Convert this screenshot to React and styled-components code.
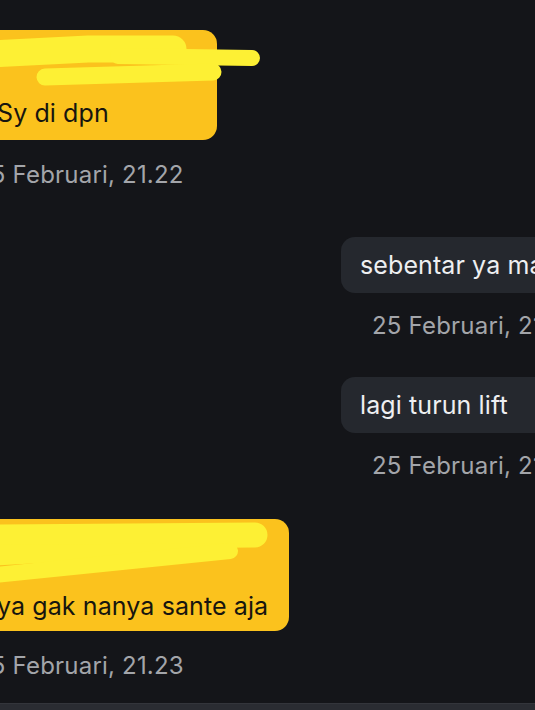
import React from "react";
import styled, { createGlobalStyle } from "styled-components";

const Global = createGlobalStyle`
  html, body { margin: 0; padding: 0; background: #141519; }
  body { font-family: "Inter", "Liberation Sans", sans-serif; }
`;

const Page = styled.div`
  width: 535px;
  height: 710px;
  overflow: hidden;
  background: #141519;
  display: flex;
  flex-direction: column;
`;

const Thread = styled.div`
  flex: 1;
  display: flex;
  flex-direction: column;
  padding-top: 30px;
`;

const Group = styled.div`
  display: flex;
  flex-direction: column;
  align-items: flex-start;
  gap: ${(p) => p.$gap}px;
  margin-top: ${(p) => p.$top || 0}px;
  padding-left: ${(p) => (p.$out ? 341 : 0)}px;
`;

const Bubble = styled.div`
  position: relative;
  box-sizing: border-box;
  width: max-content;
  border-radius: 14px;
  font-size: 25px;
  line-height: 30px;
  letter-spacing: 0.1px;
  white-space: nowrap;
  ${(p) =>
    p.$out
      ? `
    background: #25282e;
    color: #eeeff1;
    padding: 13px 40px 13px 19px;
  `
      : `
    background: #fbc21d;
    color: #17150f;
    margin-left: -32px;
    padding: 12px 16px ${p.$bottom}px 29px;
  `}
`;

const Redacted = styled.div`
  width: ${(p) => p.$w}px;
  height: ${(p) => p.$h}px;
`;

const Scribble = styled.svg`
  position: absolute;
  left: 0;
  top: 0;
  overflow: visible;
  pointer-events: none;
`;

const Time = styled.div`
  font-size: 24px;
  line-height: 30px;
  letter-spacing: 0.2px;
  color: #a3a5aa;
  white-space: nowrap;
  margin-left: ${(p) => (p.$out ? 31 : -24)}px;
`;

const InputEdge = styled.div`
  height: 6px;
  background: #2a2c32;
  border-top: 1px solid #33353b;
`;

const HL = "#fdf034";

export default function App() {
  return (
    <Page>
      <Global />
      <Thread>
        <Group $gap={20}>
          <Bubble $bottom={12}>
            <Scribble width="1" height="1">
              <path d="M 22 24 L 120 19 L 205 19" stroke={HL} strokeWidth="27" strokeLinecap="round" fill="none" />
              <path d="M 150 26 L 284 28" stroke={HL} strokeWidth="16" strokeLinecap="round" fill="none" />
              <path d="M 77 47 L 245 42" stroke={HL} strokeWidth="17" strokeLinecap="round" fill="none" />
            </Scribble>
            <Redacted $w={204} $h={56} />
            Sy di dpn
          </Bubble>
          <Time>25 Februari, 21.22</Time>
        </Group>

        <Group $out $gap={18} $top={47}>
          <Bubble $out>sebentar ya mas</Bubble>
          <Time $out>25 Februari, 21.22</Time>
        </Group>

        <Group $out $gap={18} $top={36}>
          <Bubble $out>lagi turun lift</Bubble>
          <Time $out>25 Februari, 21.23</Time>
        </Group>

        <Group $gap={20} $top={38}>
          <Bubble $bottom={10}>
            <Scribble width="1" height="1">
              <path d="M 20 18 L 287 16" stroke={HL} strokeWidth="25" strokeLinecap="round" fill="none" />
              <path d="M 0 26 L 278 24 L 252 34 L 0 48 Z" fill={HL} />
              <path d="M 8 58 L 262 32" stroke={HL} strokeWidth="16" strokeLinecap="round" fill="none" />
            </Scribble>
            <Redacted $w={276} $h={60} />
            ya gak nanya sante aja
          </Bubble>
          <Time>25 Februari, 21.23</Time>
        </Group>
      </Thread>
      <InputEdge />
    </Page>
  );
}
